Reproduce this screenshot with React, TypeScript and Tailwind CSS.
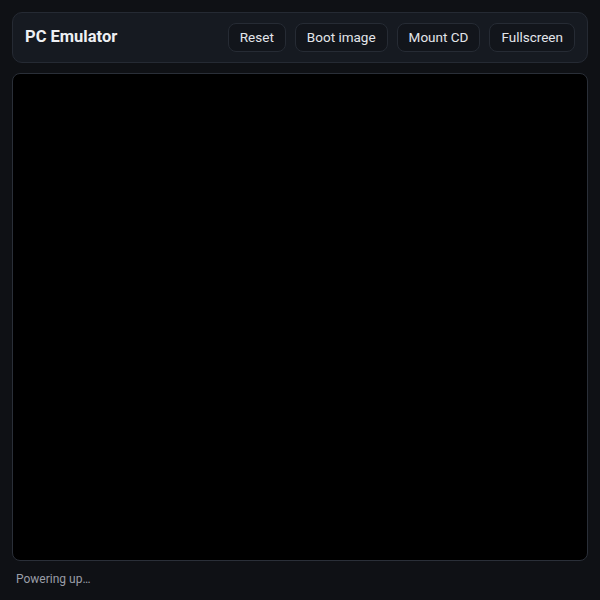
const buttons = ["Reset", "Boot image", "Mount CD", "Fullscreen"];

export default function App() {
  return (
    <div
      className="flex h-[600px] w-[600px] flex-col bg-[#0f1115] p-3 text-[#e6e8ec]"
      style={{ fontFamily: "Roboto, 'Noto Sans', sans-serif" }}
    >
      {/* Toolbar */}
      <header className="flex h-[51px] items-center justify-between rounded-[10px] border border-[#252a33] bg-[#161a21] pl-3 pr-3">
        <h1 className="text-[16.5px] font-bold text-[#eef0f3]">PC Emulator</h1>
        <div className="flex gap-[9px]">
          {buttons.map((label) => (
            <button
              key={label}
              className="h-[29px] rounded-lg border border-[#262b34] bg-[#12151b] px-[11px] text-[13.5px] text-[#e3e5ea]"
            >
              {label}
            </button>
          ))}
        </div>
      </header>

      {/* Screen */}
      <div className="mt-[10px] h-[489px] rounded-lg border border-[#2a2f38] bg-black" />

      <p className="mt-[9px] pl-1 text-[12px] text-[#9a9ea7]">Powering up…</p>
    </div>
  );
}
